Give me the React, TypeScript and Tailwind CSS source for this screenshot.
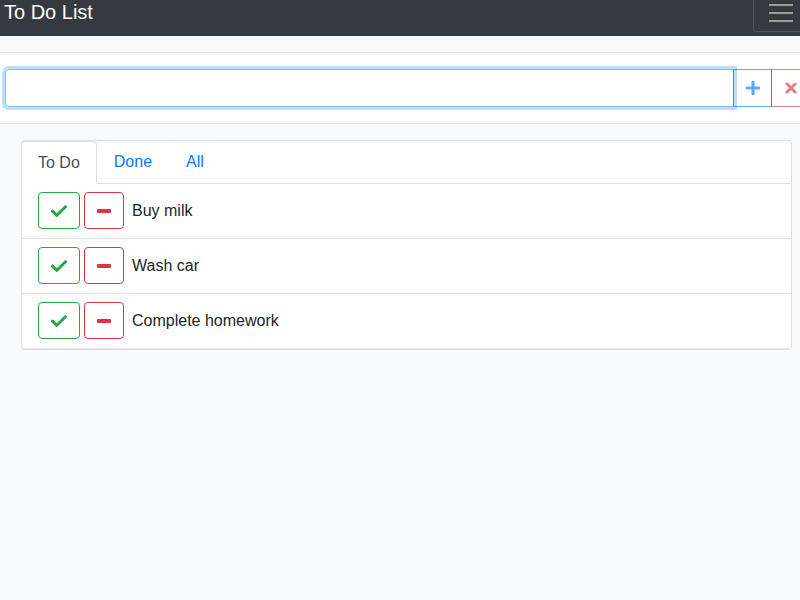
import React from "react";

const items = ["Buy milk", "Wash car", "Complete homework"];

function CheckIcon() {
  return (
    <svg width="16" height="12" viewBox="0 0 16 12" aria-hidden="true">
      <path d="M1.5 6.2 L5.8 10.3 L14.5 1.7" fill="none" stroke="#28a745" strokeWidth="3" strokeLinecap="round" strokeLinejoin="round" />
    </svg>
  );
}

function MinusIcon() {
  return (
    <svg width="14" height="4" viewBox="0 0 14 4" aria-hidden="true">
      <rect x="0" y="0" width="14" height="4" rx="1" fill="#dc3545" />
    </svg>
  );
}

export default function App() {
  return (
    <div className="min-h-screen w-full overflow-hidden bg-[#f8f9fa] font-['Liberation_Sans',Arial,sans-serif]">
      <nav className="flex h-[36px] items-start justify-between bg-[#343a40]">
        <span className="pl-[4px] pt-[2px] text-[20px] leading-[20px] text-white">To Do List</span>
        <button className="-mt-[9px] flex h-[41px] w-[47px] flex-col items-end justify-end gap-[6px] rounded-bl-[4px] border-b border-l border-[#4d5358] pb-[9px] pr-[7px]">
          <span className="block h-[2px] w-[24px] bg-[#9b9ea1]" />
          <span className="block h-[2px] w-[24px] bg-[#9b9ea1]" />
          <span className="block h-[2px] w-[24px] bg-[#9b9ea1]" />
        </button>
      </nav>

      <div className="h-[16px]" />

      <div className="flex overflow-hidden border-y border-[#dee2e6] bg-white py-4 pl-[5px]">
        <input
          className="h-[38px] w-[729px] shrink-0 rounded-l-[4px] border border-[#80bdff] px-3 outline-none shadow-[0_0_0_3px_rgba(0,123,255,0.25)]"
          aria-label="New item"
        />
        <button className="-ml-px flex h-[38px] w-[39px] shrink-0 items-center justify-center border border-[#007bff] opacity-65">
          <svg width="14" height="14" viewBox="0 0 14 14" aria-hidden="true">
            <path d="M7 1 V13 M1 7 H13" stroke="#007bff" strokeWidth="3" strokeLinecap="round" />
          </svg>
        </button>
        <button className="-ml-px flex h-[38px] w-[39px] shrink-0 items-center justify-center border border-[#dc3545] opacity-65">
          <svg width="12" height="12" viewBox="0 0 12 12" aria-hidden="true">
            <path d="M2 2 L10 10 M10 2 L2 10" stroke="#dc3545" strokeWidth="3" strokeLinecap="round" />
          </svg>
        </button>
      </div>

      <div className="ml-[21px] mr-[8px] mt-[16px] rounded-[4px] border border-[#dee2e6] bg-white">
        <div className="flex border-b border-[#dee2e6] text-[16px] leading-[24px]">
          <span className="-mb-px rounded-t-[4px] border border-b-white border-l-0 border-[#dee2e6] bg-white px-4 pb-[8px] pt-[9px] text-[#495057]">
            To Do
          </span>
          <span className="pl-[17px] pr-4 pb-[8px] pt-[9px] text-[#007bff]">Done</span>
          <span className="pl-[18px] pr-4 pb-[8px] pt-[9px] text-[#007bff]">All</span>
        </div>
        <ul className="border-b border-[#e5e7ea]">
          {items.map((item, i) => (
            <li
              key={item}
              className={"flex items-center pb-[9px] pl-4 pt-[8px] " + (i > 0 ? "border-t border-[#dee2e6]" : "")}
            >
              <button className="flex h-[37px] w-[42px] items-center justify-center rounded-[4px] border border-[#28a745]">
                <CheckIcon />
              </button>
              <button className="ml-[4px] flex h-[37px] w-[40px] items-center justify-center rounded-[4px] border border-[#dc3545]">
                <MinusIcon />
              </button>
              <span className="ml-[8px] text-[16px] leading-[24px] text-[#212529]">{item}</span>
            </li>
          ))}
        </ul>
      </div>
    </div>
  );
}
